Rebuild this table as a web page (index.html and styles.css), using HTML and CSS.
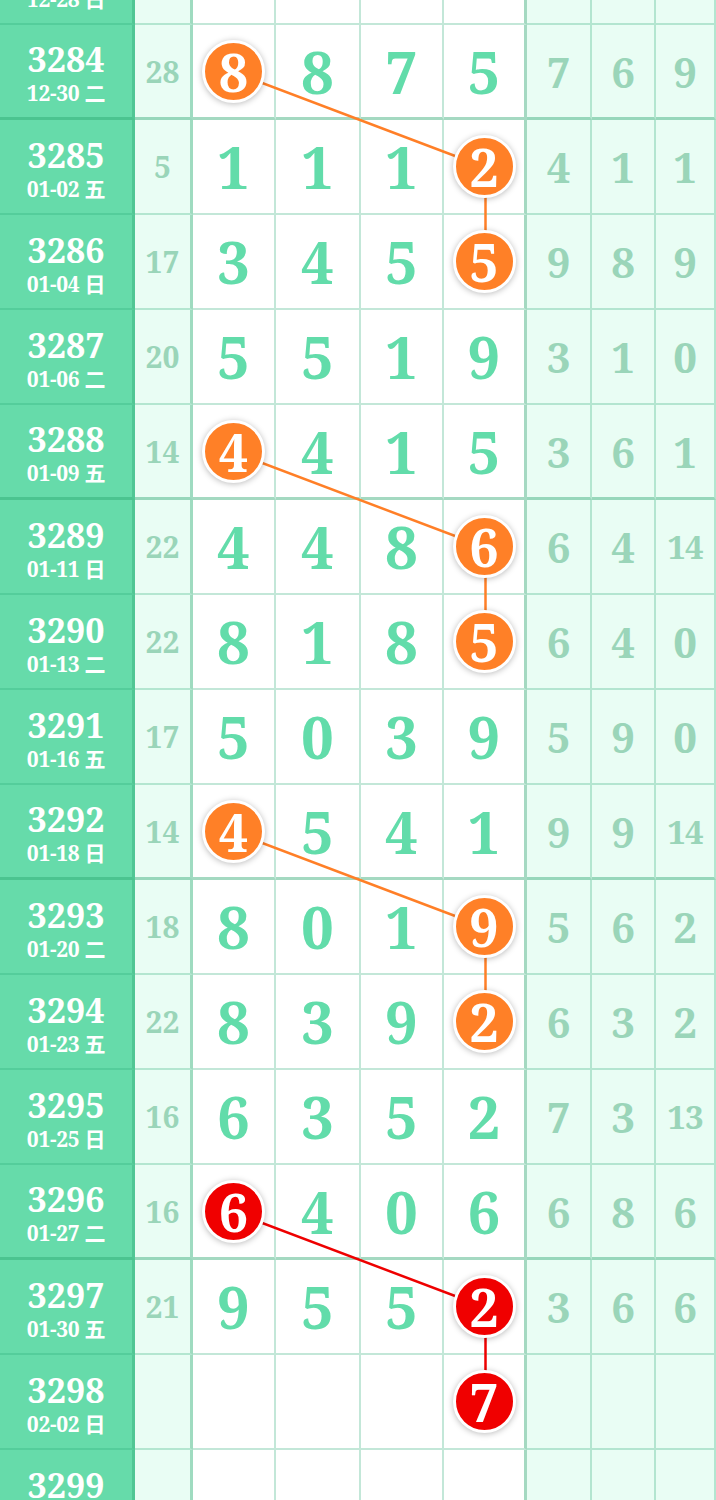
FILE: index.html
```html
<!DOCTYPE html>
<html lang="zh">
<head>
<meta charset="utf-8">
<title>走势图</title>
<link rel="stylesheet" href="styles.css">
</head>
<body>
<div class="board">
  <svg class="links" width="716" height="1615" viewBox="0 0 716 1615">
    <g class="orange">
      <line x1="234.5" y1="142.5" x2="485.5" y2="237.5"/>
      <line x1="485.5" y1="237.5" x2="485.5" y2="332.5"/>
      <line x1="234.5" y1="522.5" x2="485.5" y2="617.5"/>
      <line x1="485.5" y1="617.5" x2="485.5" y2="712.5"/>
      <line x1="234.5" y1="902.5" x2="485.5" y2="997.5"/>
      <line x1="485.5" y1="997.5" x2="485.5" y2="1092.5"/>
    </g>
    <g class="red">
      <line x1="234.5" y1="1282.5" x2="485.5" y2="1377.5"/>
      <line x1="485.5" y1="1377.5" x2="485.5" y2="1472.5"/>
    </g>
  </svg>

  <div class="row">
    <div class="lab"><span class="no">3283</span><span class="dt">12-28 日</span></div>
    <div class="s"></div><div class="m"></div><div class="m"></div><div class="m"></div><div class="m"></div>
    <div class="r"></div><div class="r"></div><div class="r"></div>
  </div>

  <div class="row end">
    <div class="lab"><span class="no">3284</span><span class="dt">12-30 二</span></div>
    <div class="s">28</div>
    <div class="m"><span class="ball">8</span></div><div class="m">8</div><div class="m">7</div><div class="m">5</div>
    <div class="r">7</div><div class="r">6</div><div class="r">9</div>
  </div>

  <div class="row">
    <div class="lab"><span class="no">3285</span><span class="dt">01-02 五</span></div>
    <div class="s">5</div>
    <div class="m">1</div><div class="m">1</div><div class="m">1</div><div class="m"><span class="ball">2</span></div>
    <div class="r">4</div><div class="r">1</div><div class="r">1</div>
  </div>

  <div class="row">
    <div class="lab"><span class="no">3286</span><span class="dt">01-04 日</span></div>
    <div class="s">17</div>
    <div class="m">3</div><div class="m">4</div><div class="m">5</div><div class="m"><span class="ball">5</span></div>
    <div class="r">9</div><div class="r">8</div><div class="r">9</div>
  </div>

  <div class="row">
    <div class="lab"><span class="no">3287</span><span class="dt">01-06 二</span></div>
    <div class="s">20</div>
    <div class="m">5</div><div class="m">5</div><div class="m">1</div><div class="m">9</div>
    <div class="r">3</div><div class="r">1</div><div class="r">0</div>
  </div>

  <div class="row end">
    <div class="lab"><span class="no">3288</span><span class="dt">01-09 五</span></div>
    <div class="s">14</div>
    <div class="m"><span class="ball">4</span></div><div class="m">4</div><div class="m">1</div><div class="m">5</div>
    <div class="r">3</div><div class="r">6</div><div class="r">1</div>
  </div>

  <div class="row">
    <div class="lab"><span class="no">3289</span><span class="dt">01-11 日</span></div>
    <div class="s">22</div>
    <div class="m">4</div><div class="m">4</div><div class="m">8</div><div class="m"><span class="ball">6</span></div>
    <div class="r">6</div><div class="r">4</div><div class="r two">14</div>
  </div>

  <div class="row">
    <div class="lab"><span class="no">3290</span><span class="dt">01-13 二</span></div>
    <div class="s">22</div>
    <div class="m">8</div><div class="m">1</div><div class="m">8</div><div class="m"><span class="ball">5</span></div>
    <div class="r">6</div><div class="r">4</div><div class="r">0</div>
  </div>

  <div class="row">
    <div class="lab"><span class="no">3291</span><span class="dt">01-16 五</span></div>
    <div class="s">17</div>
    <div class="m">5</div><div class="m">0</div><div class="m">3</div><div class="m">9</div>
    <div class="r">5</div><div class="r">9</div><div class="r">0</div>
  </div>

  <div class="row end">
    <div class="lab"><span class="no">3292</span><span class="dt">01-18 日</span></div>
    <div class="s">14</div>
    <div class="m"><span class="ball">4</span></div><div class="m">5</div><div class="m">4</div><div class="m">1</div>
    <div class="r">9</div><div class="r">9</div><div class="r two">14</div>
  </div>

  <div class="row">
    <div class="lab"><span class="no">3293</span><span class="dt">01-20 二</span></div>
    <div class="s">18</div>
    <div class="m">8</div><div class="m">0</div><div class="m">1</div><div class="m"><span class="ball">9</span></div>
    <div class="r">5</div><div class="r">6</div><div class="r">2</div>
  </div>

  <div class="row">
    <div class="lab"><span class="no">3294</span><span class="dt">01-23 五</span></div>
    <div class="s">22</div>
    <div class="m">8</div><div class="m">3</div><div class="m">9</div><div class="m"><span class="ball">2</span></div>
    <div class="r">6</div><div class="r">3</div><div class="r">2</div>
  </div>

  <div class="row">
    <div class="lab"><span class="no">3295</span><span class="dt">01-25 日</span></div>
    <div class="s">16</div>
    <div class="m">6</div><div class="m">3</div><div class="m">5</div><div class="m">2</div>
    <div class="r">7</div><div class="r">3</div><div class="r two">13</div>
  </div>

  <div class="row end">
    <div class="lab"><span class="no">3296</span><span class="dt">01-27 二</span></div>
    <div class="s">16</div>
    <div class="m"><span class="ball hot">6</span></div><div class="m">4</div><div class="m">0</div><div class="m">6</div>
    <div class="r">6</div><div class="r">8</div><div class="r">6</div>
  </div>

  <div class="row">
    <div class="lab"><span class="no">3297</span><span class="dt">01-30 五</span></div>
    <div class="s">21</div>
    <div class="m">9</div><div class="m">5</div><div class="m">5</div><div class="m"><span class="ball hot">2</span></div>
    <div class="r">3</div><div class="r">6</div><div class="r">6</div>
  </div>

  <div class="row">
    <div class="lab"><span class="no">3298</span><span class="dt">02-02 日</span></div>
    <div class="s"></div>
    <div class="m"></div><div class="m"></div><div class="m"></div><div class="m"><span class="ball hot">7</span></div>
    <div class="r"></div><div class="r"></div><div class="r"></div>
  </div>

  <div class="row">
    <div class="lab"><span class="no">3299</span><span class="dt">02-04 二</span></div>
    <div class="s"></div><div class="m"></div><div class="m"></div><div class="m"></div><div class="m"></div>
    <div class="r"></div><div class="r"></div><div class="r"></div>
  </div>
</div>
</body>
</html>
```

FILE: styles.css
```css
html, body {
  margin: 0;
  padding: 0;
  background: #ffffff;
  overflow: hidden;
}

.board {
  position: relative;
  width: 716px;
  margin-top: -70px;
  font-family: "Noto Serif", "DejaVu Serif", "Noto Sans CJK SC", serif;
  font-weight: bold;
}

.links {
  position: absolute;
  left: 0;
  top: 0;
  z-index: 2;
  pointer-events: none;
}

.links line {
  stroke-width: 2.5;
  stroke-linecap: round;
}

.links .orange line { stroke: #ff7f27; }
.links .red line { stroke: #ee0000; }

.row {
  display: grid;
  grid-template-columns: 135px 58px 83px 85px 83px 83px 65px 64px 60px;
  height: 95px;
}

.row > div {
  box-sizing: border-box;
  display: flex;
  align-items: center;
  justify-content: center;
  border-right: 2px solid rgba(40, 170, 115, 0.28);
  border-bottom: 2px solid rgba(40, 170, 115, 0.28);
}

.row.end > div {
  border-bottom: 3px solid rgba(40, 165, 110, 0.42);
}

.lab {
  flex-direction: column;
  background: #66dbaa;
  color: #ffffff;
  gap: 4px;
  padding-top: 4px;
}

.row > .lab {
  border-right: 3px solid rgba(40, 160, 110, 0.35);
}

.no {
  font-size: 34px;
  line-height: 36px;
}

.dt {
  font-size: 21px;
  line-height: 24px;
  letter-spacing: -0.3px;
}

.s {
  background: #e9fdf4;
  color: #9ad5b9;
  font-size: 30px;
}

.row > .s {
  border-right: 3px solid rgba(40, 165, 110, 0.38);
}

.m {
  background: #ffffff;
  color: #62dcaa;
  font-size: 58px;
  position: relative;
}

.row > .m:nth-child(6) {
  border-right: 3px solid rgba(40, 165, 110, 0.42);
}

.r {
  background: #e9fdf4;
  color: #9ad5b9;
  font-size: 42px;
}

.r.two {
  font-size: 33px;
  letter-spacing: -1px;
}

.ball {
  position: relative;
  z-index: 3;
  box-sizing: border-box;
  width: 63px;
  height: 63px;
  border-radius: 50%;
  border: 3px solid #ffffff;
  background: #ff8027;
  color: #ffffff;
  font-size: 52px;
  line-height: 57px;
  text-align: center;
  box-shadow: 0 1px 6px rgba(0, 0, 0, 0.28);
}

.ball.hot {
  background: #f00000;
}
```
